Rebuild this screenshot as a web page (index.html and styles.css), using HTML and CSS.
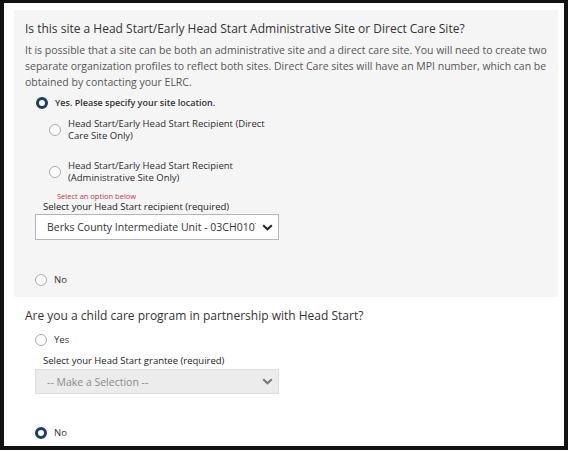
FILE: index.html
```html
<!DOCTYPE html>
<html>
<head>
<meta charset="utf-8">
<link rel="stylesheet" href="styles.css">
</head>
<body>
<div class="frame">
  <section class="panel">
    <h2 class="q">Is this site a Head Start/Early Head Start Administrative Site or Direct Care Site?</h2>
    <p class="desc">It is possible that a site can be both an administrative site and a direct care site. You will need to create two separate organization profiles to reflect both sites. Direct Care sites will have an MPI number, which can be obtained by contacting your ELRC.</p>
    <div class="opt opt-yes"><span class="radio on"></span><span class="lbl strong">Yes. Please specify your site location.</span></div>
    <div class="sub sub1"><span class="radio"></span><span class="lbl">Head Start/Early Head Start Recipient (Direct Care Site Only)</span></div>
    <div class="sub sub2"><span class="radio"></span><span class="lbl">Head Start/Early Head Start Recipient (Administrative Site Only)</span></div>
    <div class="err">Select an option below</div>
    <div class="field-lbl">Select your Head Start recipient (required)</div>
    <div class="select"><span class="sel-text">Berks County Intermediate Unit - 03CH010784</span><svg class="chev" width="11" height="7" viewBox="0 0 11 7"><path d="M1.2 1.2 L5.5 5.3 L9.8 1.2" fill="none" stroke="#222" stroke-width="2"/></svg></div>
    <div class="opt opt-no"><span class="radio"></span><span class="lbl">No</span></div>
  </section>
  <section class="plain">
    <h2 class="q">Are you a child care program in partnership with Head Start?</h2>
    <div class="opt opt-yes2"><span class="radio"></span><span class="lbl">Yes</span></div>
    <div class="field-lbl lbl2">Select your Head Start grantee (required)</div>
    <div class="select disabled"><span class="sel-text">-- Make a Selection --</span><svg class="chev" width="11" height="7" viewBox="0 0 11 7"><path d="M1.2 1.2 L5.5 5.3 L9.8 1.2" fill="none" stroke="#777" stroke-width="2"/></svg></div>
    <div class="opt opt-no2"><span class="radio on"></span><span class="lbl">No</span></div>
  </section>
</div>
</body>
</html>
```
FILE: styles.css
```css
* { box-sizing: border-box; }
html, body { margin: 0; padding: 0; background: #fff; }
body {
  font-family: "Open Sans", "Noto Sans", sans-serif;
  color: #333;
  width: 570px;
  height: 452px;
  overflow: hidden;
}
.frame {
  width: 568px;
  height: 450px;
  border: 4px solid #111;
  border-top-width: 3px;
  padding: 7px 6px 0 10px;
  display: flex;
  flex-direction: column;
}
.panel {
  background: #f5f5f5;
  height: 287px;
  padding: 11px 10px 0 11px;
  display: flex;
  flex-direction: column;
}
.q {
  margin: 0;
  font-size: 12px;
  font-weight: 400;
  line-height: 16px;
  color: #333;
}
.desc {
  margin: 5px 0 0;
  font-size: 10.5px;
  line-height: 16px;
  color: #555;
}
.opt {
  display: flex;
  align-items: center;
  gap: 7px;
  font-size: 9.5px;
  line-height: 14px;
  color: #333;
}
.strong { font-weight: 600; font-size: 9px; }
.radio {
  width: 12px;
  height: 12px;
  border-radius: 50%;
  border: 1px solid #a9a9a9;
  background: #fff;
  flex: none;
}
.radio.on {
  border: 3.5px solid #1c3d6a;
  background: #fff;
}
.opt-yes { margin: 6px 0 0 11px; }
.sub {
  display: flex;
  align-items: center;
  gap: 7px;
  margin-left: 24px;
  font-size: 9.5px;
  line-height: 12px;
  color: #2b2b2b;
}
.sub .lbl { width: 200px; }
.sub1 { margin-top: 8px; }
.sub2 { margin-top: 18px; }
.err {
  margin: 8px 0 0 32px;
  font-size: 7.5px;
  line-height: 8px;
  color: #b8394a;
}
.field-lbl {
  margin: 1px 0 0 18px;
  font-size: 9.5px;
  line-height: 11px;
  color: #222;
}
.select {
  margin: 2px 0 0 10px;
  width: 244px;
  height: 26px;
  background: #fff;
  border: 1px solid #b5b5b5;
  display: flex;
  align-items: center;
  padding: 0 5px 0 11px;
  gap: 6px;
}
.sel-text {
  flex: 1;
  white-space: nowrap;
  overflow: hidden;
  font-size: 10.5px;
  color: #333;
}
.chev { flex: none; }
.opt-no { margin: 33px 0 0 10px; }
.plain {
  padding: 11px 0 0 11px;
  display: flex;
  flex-direction: column;
}
.opt-yes2 { margin: 9px 0 0 10px; }
.lbl2 { margin-top: 8px; }
.select.disabled {
  background: #ececec;
  border-color: #dedede;
  height: 25px;
  margin-top: 3px;
}
.select.disabled .sel-text { color: #8a8a8a; }
.opt-no2 { margin: 32px 0 0 10px; }
```
